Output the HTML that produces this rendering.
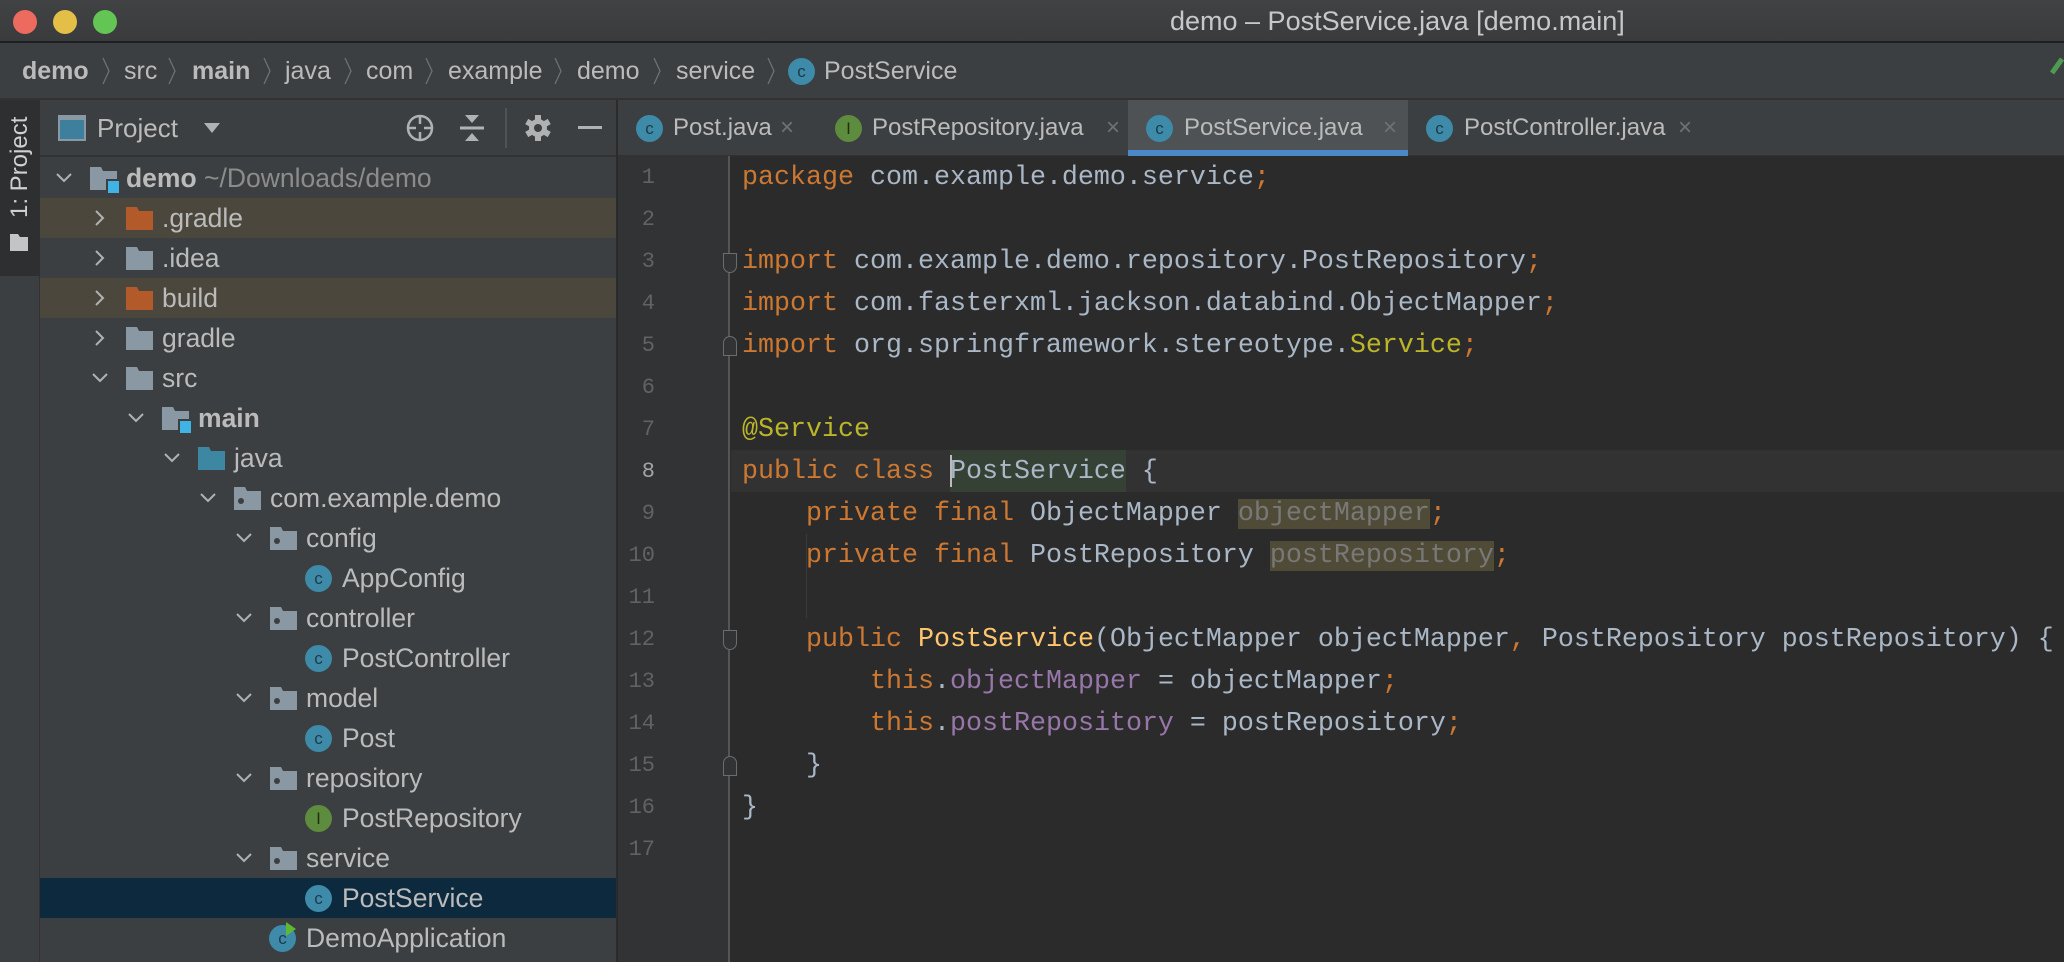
<!DOCTYPE html>
<html><head><meta charset="utf-8"><style>
*{margin:0;padding:0;box-sizing:border-box}
body{width:2064px;height:962px;overflow:hidden;background:#2b2b2b;font-family:"Liberation Sans",sans-serif;position:relative}
.a{position:absolute}
#title{left:0;top:0;width:2064px;height:43px;background:linear-gradient(#404244,#393b3d);border-bottom:2px solid #1e1f20}
.dot{position:absolute;top:10px;width:24px;height:24px;border-radius:50%}
#crumb{left:0;top:43px;width:2064px;height:57px;background:#3c3f41;border-bottom:2px solid #323232}
.cb{position:absolute;top:13px;font-size:25px;color:#bbbbbb;line-height:30px}
.sep{position:absolute;top:14px;width:10px;height:28px}
#stripe{left:0;top:100px;width:40px;height:862px;background:#3c3f41;border-right:1px solid #323232}
#side{left:40px;top:100px;width:578px;height:862px;background:#3c3f41;border-right:2px solid #2b2b2b}
.row{position:absolute;left:0;width:576px;height:40px}
.tx{position:absolute;top:4px;font-size:26.5px;color:#bbbbbb;line-height:32px;white-space:nowrap}
.chev{position:absolute;top:10px;width:20px;height:20px}
.ci{position:absolute;top:7px;width:27px;height:27px;border-radius:50%;background:#3e8aa9;color:#1f3a48;font-size:17px;text-align:center;line-height:27px;font-family:"Liberation Sans",sans-serif}
#tabs{left:618px;top:100px;width:1446px;height:56px;background:#3c3f41;border-bottom:1px solid #323232}
.tab{position:absolute;top:0;height:56px}
.tab .ci{top:15px}
.tab .tt{position:absolute;top:13px;font-size:24px;color:#bbbbbb;line-height:30px;white-space:nowrap}
.tab .x{position:absolute;top:13px;font-size:24px;color:#6f7274;line-height:30px}
#gutter{left:618px;top:156px;width:112px;height:806px;background:#313335;border-right:2px solid #555}
.ln{position:absolute;left:0;width:37px;text-align:right;font-family:"Liberation Mono",monospace;font-size:22px;color:#606366;line-height:42px}
.code{position:absolute;left:742px;font-family:"Liberation Mono",monospace;font-size:26.67px;line-height:42px;color:#a9b7c6;white-space:pre}
.k{color:#cc7832}.an{color:#bbb529}.f{color:#9876aa}.m{color:#ffc66d}
.un{color:#787878;background:#4f4b37}
.fold{position:absolute;left:722px;width:14px;height:20px;border:1.5px solid #6a6d70;background:#313335}
</style></head><body>
<div id="title" class="a">
<div class="dot" style="left:13px;background:#ed6a5e"></div>
<div class="dot" style="left:53px;background:#e3bf48"></div>
<div class="dot" style="left:93px;background:#62c554"></div>
<div class="a" style="left:1170px;top:5px;font-size:27px;color:#c8c8c8;line-height:32px;white-space:nowrap">demo – PostService.java [demo.main]</div>
</div>
<div id="crumb" class="a">
<div class="cb" style="left:22px;font-weight:bold">demo</div>
<svg class="sep" style="left:101px" viewBox="0 0 10 28"><path d="M2 1L8 14L2 27" stroke="#6e7173" stroke-width="1.3" fill="none"/></svg>
<div class="cb" style="left:124px">src</div>
<svg class="sep" style="left:167px" viewBox="0 0 10 28"><path d="M2 1L8 14L2 27" stroke="#6e7173" stroke-width="1.3" fill="none"/></svg>
<div class="cb" style="left:192px;font-weight:bold">main</div>
<svg class="sep" style="left:262px" viewBox="0 0 10 28"><path d="M2 1L8 14L2 27" stroke="#6e7173" stroke-width="1.3" fill="none"/></svg>
<div class="cb" style="left:285px">java</div>
<svg class="sep" style="left:343px" viewBox="0 0 10 28"><path d="M2 1L8 14L2 27" stroke="#6e7173" stroke-width="1.3" fill="none"/></svg>
<div class="cb" style="left:366px">com</div>
<svg class="sep" style="left:424px" viewBox="0 0 10 28"><path d="M2 1L8 14L2 27" stroke="#6e7173" stroke-width="1.3" fill="none"/></svg>
<div class="cb" style="left:448px">example</div>
<svg class="sep" style="left:553px" viewBox="0 0 10 28"><path d="M2 1L8 14L2 27" stroke="#6e7173" stroke-width="1.3" fill="none"/></svg>
<div class="cb" style="left:577px">demo</div>
<svg class="sep" style="left:652px" viewBox="0 0 10 28"><path d="M2 1L8 14L2 27" stroke="#6e7173" stroke-width="1.3" fill="none"/></svg>
<div class="cb" style="left:676px">service</div>
<svg class="sep" style="left:766px" viewBox="0 0 10 28"><path d="M2 1L8 14L2 27" stroke="#6e7173" stroke-width="1.3" fill="none"/></svg>
<div class="ci" style="left:788px;top:15px">c</div>
<div class="cb" style="left:824px">PostService</div>
<svg class="a" style="left:2048px;top:14px" width="16" height="20" viewBox="0 0 16 20"><path d="M4 16L14 2" stroke="#4e9a51" stroke-width="5" fill="none"/></svg>
</div>
<div id="stripe" class="a">
<div class="a" style="left:0;top:0;width:40px;height:176px;background:#2d2f31"></div>
<div class="a" style="left:6px;top:118px;transform:rotate(-90deg);transform-origin:0 0;font-size:24px;color:#d0d0d0;white-space:nowrap;line-height:28px">1: Project</div>
<svg class="a" style="left:9px;top:132px" width="20" height="20" viewBox="0 0 20 20"><path d="M1 2H9L11 5H19V19H1Z" fill="#c4c4c4"/></svg>
</div>
<div id="side" class="a">
<svg class="a" style="left:18px;top:15px" width="28" height="26" viewBox="0 0 28 26"><rect x="1" y="1" width="26" height="24" fill="#3d7f9c" stroke="#8a98a3" stroke-width="2"/><rect x="1" y="1" width="26" height="4" fill="#8a98a3"/></svg>
<div class="a" style="left:57px;top:12px;font-size:26px;color:#bbbbbb;line-height:32px">Project</div>
<svg class="a" style="left:163px;top:22px" width="18" height="12" viewBox="0 0 18 12"><path d="M1 1H17L9 11Z" fill="#afb1b3"/></svg>
<svg class="a" style="left:365px;top:13px" width="30" height="30" viewBox="0 0 30 30" fill="none" stroke="#afb1b3" stroke-width="2.5"><circle cx="15" cy="15" r="12"/><path d="M15 3V11M15 19V27M3 15H11M19 15H27"/></svg>
<svg class="a" style="left:419px;top:14px" width="26" height="28" viewBox="0 0 26 28" fill="#afb1b3"><path d="M6 1H20L13 9Z"/><rect x="1" y="12.5" width="24" height="3"/><path d="M6 27H20L13 19Z"/></svg>
<div class="a" style="left:465px;top:8px;width:2px;height:40px;background:#505355"></div>
<svg class="a" style="left:484px;top:14px" width="28" height="28" viewBox="0 0 28 28"><g fill="#afb1b3"><circle cx="14" cy="14" r="9"/><rect x="11" y="1" width="6" height="26"/><rect x="11" y="1" width="6" height="26" transform="rotate(60 14 14)"/><rect x="11" y="1" width="6" height="26" transform="rotate(120 14 14)"/></g><circle cx="14" cy="14" r="4" fill="#3c3f41"/></svg>
<div class="a" style="left:538px;top:26px;width:24px;height:3px;background:#afb1b3"></div>
<div class="a" style="left:0;top:55px;width:576px;height:2px;background:#323232"></div>
</div>
<div class="a" style="left:40px;top:156px;width:576px;height:806px;overflow:hidden" id="tree"></div>
<div id="tabs" class="a">
<div class="tab" style="left:0px"><div class="ci" style="left:18px">c</div><div class="tt" style="left:55px">Post.java</div><div class="x" style="left:162px">×</div></div>
<div class="tab" style="left:187px"><div class="ci" style="left:30px;background:#5d8c3e;color:#1d3210">I</div><div class="tt" style="left:67px">PostRepository.java</div><div class="x" style="left:301px">×</div></div>
<div class="tab" style="left:510px;width:280px;background:#4e5254"><div class="ci" style="left:18px">c</div><div class="tt" style="left:56px">PostService.java</div><div class="x" style="left:255px">×</div><div class="a" style="left:0;top:50px;width:280px;height:6px;background:#4a88c7"></div></div>
<div class="tab" style="left:790px"><div class="ci" style="left:18px">c</div><div class="tt" style="left:56px">PostController.java</div><div class="x" style="left:270px">×</div></div>
</div>
<div id="gutter" class="a"></div>
<div class="a" style="left:731px;top:450px;width:1333px;height:42px;background:#323232"></div>
<div class="a" style="left:950px;top:450px;width:176px;height:42px;background:#344134"></div>
<div class="a" style="left:950px;top:455px;width:2px;height:32px;background:#bbbbbb"></div>
<div class="a" style="left:806px;top:534px;width:1px;height:84px;background:#3b3b3b"></div>
<div id="code"></div>
<div class="fold" style="left:723px;top:253px;border-radius:0 0 7px 7px"></div>
<div class="fold" style="left:723px;top:336px;border-radius:7px 7px 0 0"></div>
<div class="fold" style="left:723px;top:630px;border-radius:0 0 7px 7px"></div>
<div class="fold" style="left:723px;top:756px;border-radius:7px 7px 0 0"></div>
<script>
var rows=[
[0,'dm','demo',1,'v'],[1,'fo','.gradle',0,'>','hl'],[1,'fg','.idea',0,'>'],[1,'fo','build',0,'>','hl'],[1,'fg','gradle',0,'>'],[1,'fg','src',0,'v'],
[2,'dm','main',1,'v'],[3,'fj','java',0,'v'],[4,'fp','com.example.demo',0,'v'],[5,'fp','config',0,'v'],[6,'c','AppConfig',0],
[5,'fp','controller',0,'v'],[6,'c','PostController',0],[5,'fp','model',0,'v'],[6,'c','Post',0],[5,'fp','repository',0,'v'],[6,'i','PostRepository',0],
[5,'fp','service',0,'v'],[6,'c','PostService',0,null,'sel'],[5,'ca','DemoApplication',0]];
var h='';
rows.forEach(function(r,i){
 var n=r[0],top=2+40*i,bg=r[5]=='hl'?'background:#4b473d;':r[5]=='sel'?'background:#0d293e;':'';
 var ix=49+36*n,tx=86+36*n,cx=14+36*n;
 h+='<div class="row" style="top:'+top+'px;'+bg+'">';
 if(r[4]=='v')h+='<svg class="chev" style="left:'+cx+'px" viewBox="0 0 20 20"><path d="M3 6L10 13L17 6" stroke="#afb1b3" stroke-width="2" fill="none"/></svg>';
 if(r[4]=='>')h+='<svg class="chev" style="left:'+cx+'px" viewBox="0 0 20 20"><path d="M6 3L13 10L6 17" stroke="#afb1b3" stroke-width="2" fill="none"/></svg>';
 var t=r[1];
 if(t[0]=='f'||t=='dm'){
  var col=t=='fo'?'#b35a2a':t=='fj'?'#3d87a3':'#8a98a3';
  h+='<svg style="position:absolute;left:'+ix+'px;top:8px" width="30" height="28" viewBox="0 0 30 28"><path d="M1 1H12L14 5H28V24H1Z" fill="'+col+'"/>';
  if(t=='fp')h+='<circle cx="8" cy="15" r="3" fill="#3c3f41"/>';
  if(t=='dm')h+='<rect x="17" y="13" width="12" height="12" fill="#3c3f41"/><rect x="19" y="15" width="11" height="12" fill="#3fb4e4"/>';
  h+='</svg>';
 } else if(t=='c'){h+='<div class="ci" style="left:'+ix+'px">c</div>';}
 else if(t=='i'){h+='<div class="ci" style="left:'+ix+'px;background:#5d8c3e;color:#1d3210">I</div>';}
 else if(t=='ca'){h+='<div class="ci" style="left:'+ix+'px">c</div><svg style="position:absolute;left:'+(ix+16)+'px;top:3px" width="12" height="16" viewBox="0 0 12 16"><path d="M1 1L11 8L1 15Z" fill="#5fb832"/></svg>';}
 h+='<div class="tx" style="left:'+tx+'px;'+(r[3]?'font-weight:bold;':'')+'">'+r[2]+(i==0?' <span style="font-weight:normal;color:#8c8c8c">~/Downloads/demo</span>':'')+'</div></div>';
});
document.getElementById('tree').innerHTML=h;
var L=[
'<span class="k">package</span> com.example.demo.service<span class="k">;</span>','',
'<span class="k">import</span> com.example.demo.repository.PostRepository<span class="k">;</span>',
'<span class="k">import</span> com.fasterxml.jackson.databind.ObjectMapper<span class="k">;</span>',
'<span class="k">import</span> org.springframework.stereotype.<span class="an">Service</span><span class="k">;</span>','',
'<span class="an">@Service</span>',
'<span class="k">public class</span> PostService {',
'    <span class="k">private final</span> ObjectMapper <span class="un">objectMapper</span><span class="k">;</span>',
'    <span class="k">private final</span> PostRepository <span class="un">postRepository</span><span class="k">;</span>','',
'    <span class="k">public</span> <span class="m">PostService</span>(ObjectMapper objectMapper<span class="k">,</span> PostRepository postRepository) {',
'        <span class="k">this</span>.<span class="f">objectMapper</span> = objectMapper<span class="k">;</span>',
'        <span class="k">this</span>.<span class="f">postRepository</span> = postRepository<span class="k">;</span>',
'    }','}',''];
var c='';
L.forEach(function(s,i){var top=157+42*i;
 c+='<div class="ln" style="left:618px;top:'+top+'px;'+(i==7?'color:#a4a3a3;':'')+'">'+(i+1)+'</div>';
 c+='<div class="code" style="top:'+top+'px">'+s+'</div>';});
document.getElementById('code').innerHTML=c;
</script>
</body></html>
